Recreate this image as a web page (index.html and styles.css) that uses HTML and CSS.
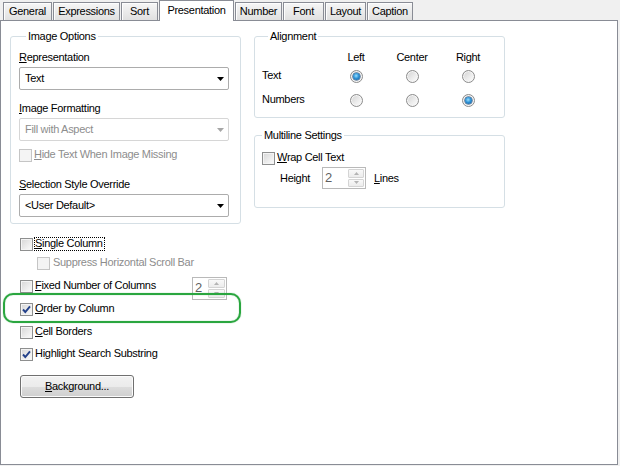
FILE: index.html
```html
<!DOCTYPE html>
<html>
<head>
<meta charset="utf-8">
<title>Presentation</title>
<link rel="stylesheet" href="styles.css">
</head>
<body>
<div class="tabs">
  <div class="tab t-general">General</div>
  <div class="tab t-expr">Expressions</div>
  <div class="tab t-sort">Sort</div>
  <div class="tab active t-pres">Presentation</div>
  <div class="tab t-number">Number</div>
  <div class="tab t-font">Font</div>
  <div class="tab t-layout">Layout</div>
  <div class="tab t-caption">Caption</div>
</div>
<div class="panel">
  <div class="col-left">
    <fieldset class="group img-opts">
      <legend>Image Options</legend>
      <div class="field-label"><u>R</u>epresentation</div>
      <div class="select">
        <span class="select-value">Text</span>
        <svg class="arrow" width="7" height="4" viewBox="0 0 7 4"><polygon points="0,0 7,0 3.5,4" fill="#000"/></svg>
      </div>
      <div class="field-label gap-l"><u>I</u>mage Formatting</div>
      <div class="select disabled">
        <span class="select-value">Fill with Aspect</span>
        <svg class="arrow" width="7" height="4" viewBox="0 0 7 4"><polygon points="0,0 7,0 3.5,4" fill="#a6a6a6"/></svg>
      </div>
      <div class="check hide-row disabled">
        <span class="cb"></span><span class="cb-text"><u>H</u>ide Text When Image Missing</span>
      </div>
      <div class="field-label gap-xl"><u>S</u>election Style Override</div>
      <div class="select">
        <span class="select-value">&lt;User Default&gt;</span>
        <svg class="arrow" width="7" height="4" viewBox="0 0 7 4"><polygon points="0,0 7,0 3.5,4" fill="#000"/></svg>
      </div>
    </fieldset>

    <div class="checks">
      <div class="check row-single">
        <span class="cb"></span><span class="cb-text focus"><u>S</u>ingle Column</span>
      </div>
      <div class="check row-suppress disabled">
        <span class="cb"></span><span class="cb-text">Suppress Horizontal Scroll Bar</span>
      </div>
      <div class="check row-fixed">
        <span class="cb"></span><span class="cb-text"><u>F</u>ixed Number of Columns</span>
        <div class="spin spin-cols">
          <span class="spin-value">2</span>
          <span class="spin-btns">
            <span class="spin-btn"><svg width="5" height="3" viewBox="0 0 5 3"><polygon points="0,3 5,3 2.5,0" fill="#b4b4b4"/></svg></span>
            <span class="spin-btn"><svg width="5" height="3" viewBox="0 0 5 3"><polygon points="0,0 5,0 2.5,3" fill="#b4b4b4"/></svg></span>
          </span>
        </div>
      </div>
      <div class="check row-next">
        <span class="cb checked"><svg width="11" height="11" viewBox="0 0 11 11"><polyline points="2,5.5 4.3,8 9,2.3" fill="none" stroke="#23418a" stroke-width="1.9"/></svg></span><span class="cb-text"><u>O</u>rder by Column</span>
      </div>
      <div class="check row-next">
        <span class="cb"></span><span class="cb-text"><u>C</u>ell Borders</span>
      </div>
      <div class="check row-last">
        <span class="cb checked"><svg width="11" height="11" viewBox="0 0 11 11"><polyline points="2,5.5 4.3,8 9,2.3" fill="none" stroke="#23418a" stroke-width="1.9"/></svg></span><span class="cb-text">Hi<u>g</u>hlight Search Substring</span>
      </div>
      <div class="btn"><u>B</u>ackground...</div>
    </div>
  </div>

  <div class="col-right">
    <fieldset class="group align">
      <legend>Alignment</legend>
      <div class="align-grid">
        <span></span>
        <span class="head">Left</span>
        <span class="head">Center</span>
        <span class="head">Right</span>
        <span class="row-label">Text</span>
        <span class="cell"><span class="radio on"><span class="dot"></span></span></span>
        <span class="cell"><span class="radio"></span></span>
        <span class="cell"><span class="radio"></span></span>
        <span class="row-label">Numbers</span>
        <span class="cell"><span class="radio"></span></span>
        <span class="cell"><span class="radio"></span></span>
        <span class="cell"><span class="radio on"><span class="dot"></span></span></span>
      </div>
    </fieldset>
    <fieldset class="group multiline">
      <legend>Multiline Settings</legend>
      <div class="check">
        <span class="cb"></span><span class="cb-text"><u>W</u>rap Cell Text</span>
      </div>
      <div class="height-row">
        <span class="height-label">Hei<u>g</u>ht</span>
        <div class="spin spin-height">
          <span class="spin-value">2</span>
          <span class="spin-btns">
            <span class="spin-btn"><svg width="5" height="3" viewBox="0 0 5 3"><polygon points="0,3 5,3 2.5,0" fill="#b4b4b4"/></svg></span>
            <span class="spin-btn"><svg width="5" height="3" viewBox="0 0 5 3"><polygon points="0,0 5,0 2.5,3" fill="#b4b4b4"/></svg></span>
          </span>
        </div>
        <span class="lines-label"><u>L</u>ines</span>
      </div>
    </fieldset>
  </div>

  <div class="highlight"></div>
</div>
</body>
</html>
```

FILE: styles.css
```css
html, body {
  margin: 0;
  padding: 0;
}
body {
  width: 620px;
  height: 466px;
  background: #f0f0f0;
  font-family: "Liberation Sans", Arial, sans-serif;
  font-size: 11px;
  letter-spacing: -0.3px;
  color: #000;
  overflow: hidden;
}
u {
  text-decoration: underline;
  text-underline-offset: 1px;
}

/* Tabs */
.tabs {
  display: flex;
  align-items: flex-end;
  gap: 1px;
  height: 20px;
  padding-left: 3px;
}
.tab {
  box-sizing: border-box;
  height: 18px;
  border: 1px solid #898c95;
  border-bottom: none;
  background: linear-gradient(#f6f6f6, #e9e9e9 60%, #e0e0e0);
  box-shadow: inset 1px 1px 0 #fdfdfd;
  text-align: center;
  line-height: 17px;
}
.tab.active {
  position: relative;
  z-index: 1;
  height: 21px;
  margin-bottom: -1px;
  background: #fff;
  box-shadow: none;
  line-height: 18px;
}
.t-general { width: 49px; }
.t-expr { width: 67px; }
.t-sort { width: 37px; }
.t-pres { width: 75px; }
.t-number { width: 47px; }
.t-font { width: 41px; }
.t-layout { width: 41px; }
.t-caption { width: 46px; }

/* Panel */
.panel {
  position: relative;
  box-sizing: border-box;
  width: 618px;
  height: 445px;
  border: 1px solid #898c95;
  background: #fff;
  padding: 9px 0 0 9px;
  display: flex;
  align-items: flex-start;
  gap: 13px;
}
.col-left { width: 231px; }
.col-right { width: 251px; }

.group {
  box-sizing: border-box;
  margin: 0;
  min-width: 0;
  border: 1px solid #d5dfe5;
  border-radius: 3px;
}
.group legend {
  padding: 0 2px;
  margin-left: 7px;
  line-height: 13px;
}
.img-opts {
  width: 231px;
  padding: 7px 10px 6px 8px;
}

.field-label {
  line-height: 14px;
}
.field-label.gap-l { margin-top: 11px; }
.field-label.gap-xl { margin-top: 15px; }

.select {
  box-sizing: border-box;
  width: 210px;
  height: 23px;
  margin-top: 3px;
  border: 1px solid #acacac;
  border-radius: 2px;
  background: #fff;
  display: flex;
  align-items: center;
  padding-left: 5px;
}
.select-value { margin-bottom: 1px; }
.select.disabled {
  border-color: #d6d6d6;
  color: #8d8d8d;
}
.select .arrow {
  margin-left: auto;
  margin-right: 4px;
  display: block;
}

/* Checkboxes */
.check {
  display: flex;
  align-items: center;
  height: 14px;
}
.cb {
  flex: none;
  box-sizing: border-box;
  width: 13px;
  height: 13px;
  border: 1px solid #8e8f8f;
  background: linear-gradient(135deg, #d6d6d6, #f1f1f1 70%, #fafafa);
  box-shadow: inset 0 0 0 1px #f4f4f4;
  display: flex;
  align-items: center;
  justify-content: center;
}
.cb svg { display: block; }
.cb-text {
  margin-left: 2px;
  margin-bottom: 2px;
  line-height: 14px;
  white-space: nowrap;
}
.check.disabled { color: #8d8d8d; }
.check.disabled .cb {
  border-color: #c5c5c5;
  background: #f4f4f4;
  box-shadow: none;
}
.cb-text.focus {
  box-sizing: border-box;
  margin-left: 1px;
  margin-bottom: 0;
  padding: 0 1px 0 0;
  height: 14px;
  line-height: 11px;
  border: 1px dotted #000;
}
.hide-row { margin-top: 7px; }

.checks {
  padding-left: 10px;
}
.row-single { margin-top: 13px; }
.row-suppress { margin-top: 5px; padding-left: 17px; }
.row-suppress .cb-text { margin-left: 3px; }
.row-fixed { margin-top: 9px; width: 208px; }
.row-next { margin-top: 9px; }
.row-last { margin-top: 8px; }

/* Spinners */
.spin {
  box-sizing: border-box;
  display: flex;
  border: 1px solid #b9b9b9;
  background: #fff;
  padding: 1px 1px 1px 0;
}
.spin-cols {
  width: 35px;
  height: 23px;
  margin: -2px 1px -7px auto;
  align-self: flex-start;
}
.spin-height {
  width: 44px;
  height: 22px;
}
.spin-value {
  flex: 1;
  padding-left: 2px;
  font-size: 13px;
  line-height: 17px;
  color: #5f5f5f;
}
.spin-btns {
  display: flex;
  flex-direction: column;
  gap: 1px;
  width: 17px;
}
.spin-height .spin-btns { width: 16px; }
.spin-btn {
  flex: 1;
  box-sizing: border-box;
  border: 1px solid #d4d4d4;
  border-radius: 1px;
  background: linear-gradient(#f9f9f9, #ececec);
  display: flex;
  align-items: center;
  justify-content: center;
}
.spin-btn svg { display: block; }

/* Button */
.btn {
  box-sizing: border-box;
  width: 114px;
  height: 23px;
  margin-top: 14px;
  border: 1px solid #707070;
  border-radius: 3px;
  background: linear-gradient(#f2f2f2, #ebebeb 50%, #dddddd 50%, #cfcfcf);
  box-shadow: inset 0 0 0 1px #fbfbfb;
  text-align: center;
  line-height: 20px;
}

/* Alignment */
.align {
  width: 251px;
  padding: 7px 7px 5px 7px;
}
.align legend { margin-left: 6px; }
.align-grid {
  display: grid;
  grid-template-columns: 66px 56px 56px 56px;
  grid-template-rows: 14px 24px 24px;
  align-items: center;
}
.align-grid .head {
  text-align: center;
  line-height: 14px;
}
.row-label { line-height: 14px; margin-bottom: 2px; }
.cell {
  display: flex;
  justify-content: center;
}
.radio {
  box-sizing: border-box;
  width: 13px;
  height: 13px;
  border-radius: 50%;
  border: 1px solid #8c8c8c;
  background: linear-gradient(135deg, #d2d2d2, #f0f0f0 65%, #fbfbfb);
  box-shadow: inset 0 0 0 1px #f6f6f6;
  display: flex;
  align-items: center;
  justify-content: center;
}
.radio .dot {
  width: 7px;
  height: 7px;
  border-radius: 50%;
  background: radial-gradient(circle at 45% 40%, #9be0ff 0, #2f93d6 45%, #0f4f8f 100%);
  box-shadow: 0 0 0 0.5px #1d4470;
}

/* Multiline */
.multiline {
  width: 251px;
  margin-top: 11px;
  padding: 9px 7px 18px 7px;
}
.multiline legend { margin-left: 0; }
.height-row {
  display: flex;
  align-items: center;
  margin-top: 2px;
  padding-left: 18px;
}
.height-label { width: 42px; margin-bottom: 1px; }
.lines-label { margin-left: 8px; margin-bottom: 1px; }

/* Annotation */
.highlight {
  position: absolute;
  left: 2px;
  top: 272px;
  width: 238px;
  height: 30px;
  box-sizing: border-box;
  border: 2.5px solid #2aa63f;
  border-radius: 10px;
  box-shadow: 0 0 1px rgba(42, 166, 63, 0.7), inset 0 0 1px rgba(42, 166, 63, 0.7);
  pointer-events: none;
}
```
